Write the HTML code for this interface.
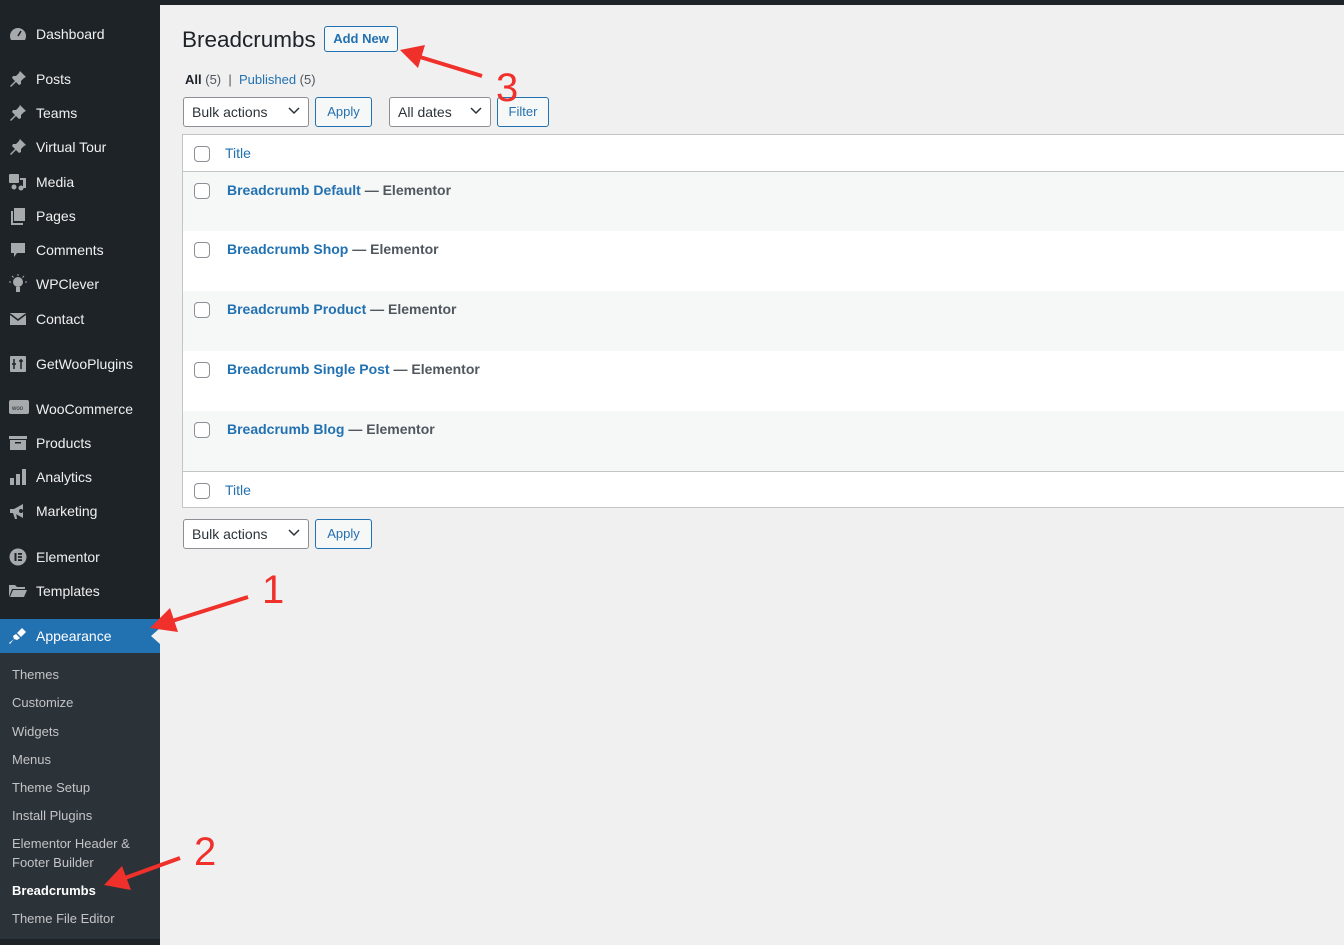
<!DOCTYPE html>
<html><head><meta charset="utf-8"><style>
*{box-sizing:border-box;margin:0;padding:0}
body{width:1344px;height:945px;overflow:hidden;background:#f0f0f1;font-family:"Liberation Sans",Arial,sans-serif;position:relative}
.top{position:absolute;left:0;top:0;width:1344px;height:5px;background:#1d2327}
.side{position:absolute;left:0;top:0;width:160px;height:945px;background:#1d2327}
.mi{position:absolute;left:36px;color:#f0f0f1;font-size:14px;line-height:18px}
.ic{position:absolute;left:9px;width:18px;height:18px;fill:#a7aaad}
.act{position:absolute;left:0;top:619px;width:160px;height:34px;background:#2271b1}
.sub{position:absolute;left:0;top:653px;width:160px;height:286px;background:#2c3338}
.si{position:absolute;left:12px;color:#c3c4c7;font-size:13px;line-height:19px}
.a{position:absolute;font-size:13px;color:#2271b1}
.btn{position:absolute;height:30px;border:1px solid #2271b1;border-radius:3px;color:#2271b1;font-size:13px;line-height:28px;text-align:center;background:#f6f7f7}
.sel{position:absolute;height:30px;border:1px solid #8c8f94;border-radius:3px;background:#fff;font-size:14px;line-height:28px;padding-left:8px;color:#2c3338}
.sel svg{position:absolute;right:8px;top:9px}
.cb{position:absolute;left:194px;width:16px;height:16px;border:1px solid #8c8f94;border-radius:4px;background:#fff}
.row{position:absolute;left:183px;width:1161px;height:60px}
.rt{position:absolute;left:227px;font-size:14px;font-weight:bold;color:#2271b1}
.rt span{color:#50575e}
</style></head><body>
<div class="side"></div>
<div class="top"></div>
<div class="act"></div>
<svg style="position:absolute;left:151px;top:628px" width="9" height="16"><polygon points="9,0 0,8 9,16" fill="#f0f0f1"/></svg>
<div class="sub"></div>

<svg class="ic" style="top:25px" viewBox="0 0 18 18"><path d="M9 3a8 8 0 0 0-8 8c0 1.5.4 2.8 1 4h14c.6-1.2 1-2.5 1-4a8 8 0 0 0-8-8z"/><path d="M9 11l3-5" stroke="#1d2327" stroke-width="1.6"/></svg>
<div class="mi" style="top:25px">Dashboard</div>
<svg class="ic" style="top:70px" viewBox="0 0 18 18"><path d="M11 1l6 6-2 1-3 3 0 3-2 1-3-3-5 5-1-1 5-5-3-3 1-2 3 0 3-3z"/></svg>
<div class="mi" style="top:70px">Posts</div>
<svg class="ic" style="top:104px" viewBox="0 0 18 18"><path d="M11 1l6 6-2 1-3 3 0 3-2 1-3-3-5 5-1-1 5-5-3-3 1-2 3 0 3-3z"/></svg>
<div class="mi" style="top:104px">Teams</div>
<svg class="ic" style="top:138px" viewBox="0 0 18 18"><path d="M11 1l6 6-2 1-3 3 0 3-2 1-3-3-5 5-1-1 5-5-3-3 1-2 3 0 3-3z"/></svg>
<div class="mi" style="top:138px">Virtual Tour</div>
<svg class="ic" style="top:173px" viewBox="0 0 18 18"><rect x="0" y="1" width="10" height="9" rx="1"/><rect x="11" y="5" width="6" height="2"/><rect x="14" y="5" width="3" height="10"/><circle cx="12" cy="15" r="2.5"/><circle cx="5" cy="14" r="2.5"/></svg>
<div class="mi" style="top:173px">Media</div>
<svg class="ic" style="top:207px" viewBox="0 0 18 18"><rect x="5" y="1" width="11" height="13"/><path d="M2 4h2v12h10v2H2z"/></svg>
<div class="mi" style="top:207px">Pages</div>
<svg class="ic" style="top:241px" viewBox="0 0 18 18"><path d="M2 2h14v10H8l-3 4v-4H2z"/></svg>
<div class="mi" style="top:241px">Comments</div>
<svg class="ic" style="top:274px" viewBox="0 0 18 18"><circle cx="9" cy="8" r="5"/><rect x="7" y="13" width="4" height="5"/><path d="M0 8h2M16 8h2M9 0v2M3 2l1.5 1.5M15 2l-1.5 1.5" stroke="#a7aaad"/></svg>
<div class="mi" style="top:275px">WPClever</div>
<svg class="ic" style="top:310px" viewBox="0 0 18 18"><path d="M1 3h16v12H1z"/><path d="M1 4l8 6 8-6" stroke="#1d2327" stroke-width="1.6" fill="none"/></svg>
<div class="mi" style="top:310px">Contact</div>
<svg class="ic" style="top:355px" viewBox="0 0 18 18"><rect x="1" y="1" width="16" height="16" rx="1"/><path d="M5 4v10M3 9h4M12 4v10M10 6h4" stroke="#1d2327" stroke-width="1.5"/></svg>
<div class="mi" style="top:355px">GetWooPlugins</div>
<svg class="ic" style="top:399px;width:20px" viewBox="0 0 20 18"><rect x="0" y="1" width="20" height="14" rx="2"/><text x="3" y="11" font-size="6" fill="#1d2327" font-family="Liberation Sans">woo</text></svg>
<div class="mi" style="top:400px">WooCommerce</div>
<svg class="ic" style="top:434px" viewBox="0 0 18 18"><rect x="0" y="2" width="18" height="3"/><rect x="1" y="6" width="16" height="10"/><rect x="6" y="8" width="6" height="1.5" fill="#1d2327"/></svg>
<div class="mi" style="top:434px">Products</div>
<svg class="ic" style="top:468px" viewBox="0 0 18 18"><rect x="1" y="10" width="4" height="7"/><rect x="7" y="6" width="4" height="11"/><rect x="13" y="1" width="4" height="16"/></svg>
<div class="mi" style="top:468px">Analytics</div>
<svg class="ic" style="top:502px" viewBox="0 0 18 18"><path d="M1 7h4l9-5v14l-9-5H1z"/><path d="M4 11l2 6h2l-1-6z"/><circle cx="12" cy="9" r="2" fill="#1d2327"/></svg>
<div class="mi" style="top:502px">Marketing</div>
<svg class="ic" style="top:548px" viewBox="0 0 18 18"><circle cx="9" cy="9" r="8.5"/><rect x="5.5" y="5" width="2" height="8" fill="#1d2327"/><rect x="9" y="5" width="4" height="1.8" fill="#1d2327"/><rect x="9" y="8.1" width="4" height="1.8" fill="#1d2327"/><rect x="9" y="11.2" width="4" height="1.8" fill="#1d2327"/></svg>
<div class="mi" style="top:548px">Elementor</div>
<svg class="ic" style="top:582px" viewBox="0 0 18 18"><path d="M0 3h6l2 2h8v2H3L0 15z"/><path d="M4 8h14l-3 7H1z"/></svg>
<div class="mi" style="top:582px">Templates</div>
<svg class="ic" style="top:627px;fill:#fff" viewBox="0 0 18 18"><path d="M13 1l4 4-5 5-4-4z"/><path d="M7 7l4 4-3 2-3-1-4 5-1-1 5-4-1-3z"/></svg>
<div class="mi" style="top:627px;color:#fff">Appearance</div>

<div class="si" style="top:665px">Themes</div>
<div class="si" style="top:693px">Customize</div>
<div class="si" style="top:722px">Widgets</div>
<div class="si" style="top:750px">Menus</div>
<div class="si" style="top:778px">Theme Setup</div>
<div class="si" style="top:806px">Install Plugins</div>
<div class="si" style="top:834px">Elementor Header &amp;<br>Footer Builder</div>
<div class="si" style="top:881px;color:#fff;font-weight:bold">Breadcrumbs</div>
<div class="si" style="top:909px">Theme File Editor</div>

<div style="position:absolute;left:182px;top:26px;font-size:22.5px;color:#1d2327;line-height:28px">Breadcrumbs</div>
<div class="btn" style="left:324px;top:26px;width:74px;height:26px;line-height:24px;font-weight:bold">Add New</div>
<div style="position:absolute;left:185px;top:72px;font-size:13px;color:#50575e"><b style="color:#1d2327">All</b> (5) &nbsp;| &nbsp;<span style="color:#2271b1">Published</span> (5)</div>

<div class="sel" style="left:183px;top:97px;width:126px">Bulk actions<svg width="12" height="8"><path d="M1 1l5 5 5-5" stroke="#2c3338" stroke-width="1.5" fill="none"/></svg></div>
<div class="btn" style="left:315px;top:97px;width:57px">Apply</div>
<div class="sel" style="left:389px;top:97px;width:102px">All dates<svg width="12" height="8"><path d="M1 1l5 5 5-5" stroke="#2c3338" stroke-width="1.5" fill="none"/></svg></div>
<div class="btn" style="left:497px;top:97px;width:52px">Filter</div>

<div style="position:absolute;left:182px;top:134px;width:1162px;height:374px;border:1px solid #c3c4c7;border-right:none;background:#fff"></div>
<div class="row" style="top:171px;background:#f6f7f7;border-top:1px solid #c3c4c7"></div>
<div class="row" style="top:291px;background:#f6f7f7"></div>
<div class="row" style="top:411px;background:#f6f7f7"></div>
<div class="row" style="top:471px;height:1px;background:#c3c4c7"></div>

<div class="cb" style="top:146px"></div><div class="a" style="left:225px;top:145px;font-size:14px">Title</div>
<div class="cb" style="top:183px"></div><div class="rt" style="top:182px">Breadcrumb Default <span>— Elementor</span></div>
<div class="cb" style="top:242px"></div><div class="rt" style="top:241px">Breadcrumb Shop <span>— Elementor</span></div>
<div class="cb" style="top:302px"></div><div class="rt" style="top:301px">Breadcrumb Product <span>— Elementor</span></div>
<div class="cb" style="top:362px"></div><div class="rt" style="top:361px">Breadcrumb Single Post <span>— Elementor</span></div>
<div class="cb" style="top:422px"></div><div class="rt" style="top:421px">Breadcrumb Blog <span>— Elementor</span></div>
<div class="cb" style="top:483px"></div><div class="a" style="left:225px;top:482px;font-size:14px">Title</div>

<div class="sel" style="left:183px;top:519px;width:126px">Bulk actions<svg width="12" height="8"><path d="M1 1l5 5 5-5" stroke="#2c3338" stroke-width="1.5" fill="none"/></svg></div>
<div class="btn" style="left:315px;top:519px;width:57px">Apply</div>

<svg style="position:absolute;left:0;top:0" width="1344" height="945">
<g stroke="#f0302a" stroke-width="4" fill="#f0302a">
<line x1="482" y1="76" x2="420" y2="57"/><polygon points="400,50 425,45 418,68" stroke="none"/>
<line x1="248" y1="597" x2="172" y2="621"/><polygon points="150,628 170,608 178,632" stroke="none"/>
<line x1="180" y1="858" x2="125" y2="878"/><polygon points="104,885 122,866 131,890" stroke="none"/>
</g>
<g fill="#f0302a" font-family="Liberation Sans" font-size="40">
<text x="496" y="101">3</text><text x="262" y="603">1</text><text x="194" y="865">2</text>
</g>
</svg>
</body></html>
